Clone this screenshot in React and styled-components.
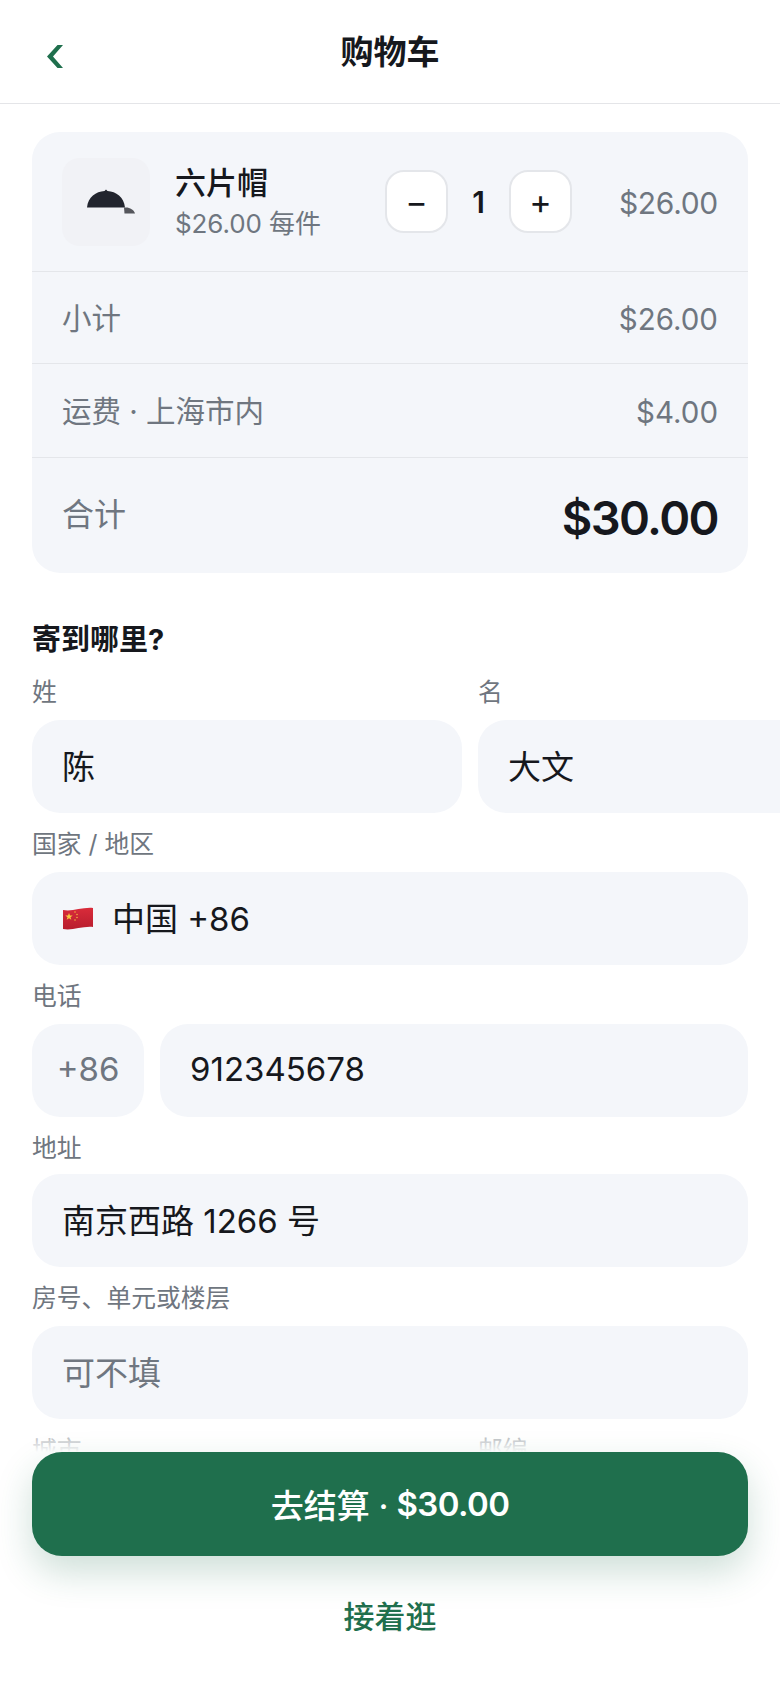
import styled, { createGlobalStyle } from "styled-components";

const GlobalStyle = createGlobalStyle`
  html, body {
    margin: 0;
    padding: 0;
    background: #fff;
  }
  body {
    font-family: Inter, "Noto Sans CJK SC", sans-serif;
    color: #16181d;
  }
  * {
    box-sizing: border-box;
  }
`;

const HatIcon = () => (
  <svg width="57" height="26" viewBox="-9 0 57 26">
    <path d="M0 18.500C1 8 9 2.500 17.500 2L19 0.500L20.500 2C29 2.500 37 8 38 18.500Z" fill="#22252e" />
    <path d="M37 18.500H39C43 18.500 47 21 48 24.500H37.500Z" fill="#55565c" />
  </svg>
);

const ChinaFlag = () => (
  <FlagSvg width="32" height="24" viewBox="0 0 32 24">
    <defs>
      <linearGradient id="flagRed" x1="0" y1="0" x2="0" y2="1">
        <stop offset="0" stopColor="#d92b3a" />
        <stop offset="1" stopColor="#b81d2e" />
      </linearGradient>
    </defs>
    <path d="M1 3C10 5 20 0 31 1V20C20 19 10 24 1 22Z" fill="url(#flagRed)" />
    <path d="M7 6l1 2.600h2.700l-2.200 1.600.8 2.600-2.300-1.600-2.300 1.600.8-2.600-2.200-1.600h2.700Z" fill="#f7c93e" />
    <circle cx="13" cy="5" r="0.700" fill="#f7c93e" />
    <circle cx="15" cy="7.500" r="0.700" fill="#f7c93e" />
    <circle cx="15" cy="10.500" r="0.700" fill="#f7c93e" />
    <circle cx="13" cy="13" r="0.700" fill="#f7c93e" />
  </FlagSvg>
);

export default function App() {
  return (
    <Screen>
      <GlobalStyle />
      <Header>
        <BackButton>
          <svg width="16" height="23" viewBox="0 0 16 23">
            <path d="M10.500 0H16L6 11.500L16 23H10.500L0 11.500Z" fill="#1f6f4d" />
          </svg>
        </BackButton>
        <Title>购物车</Title>
      </Header>

      <Content>
        <Summary>
          <ItemRow>
            <Thumb>
              <HatIcon />
            </Thumb>
            <ItemInfo>
              <ItemName>六片帽</ItemName>
              <ItemEach>$26.00 每件</ItemEach>
            </ItemInfo>
            <Stepper>
              <StepButton>−</StepButton>
              <Qty>1</Qty>
              <StepButton>+</StepButton>
            </Stepper>
            <LinePrice>$26.00</LinePrice>
          </ItemRow>
          <SummaryRow $height={92}>
            <RowLabel>小计</RowLabel>
            <RowValue>$26.00</RowValue>
          </SummaryRow>
          <SummaryRow $height={94}>
            <RowLabel>运费 · 上海市内</RowLabel>
            <RowValue>$4.00</RowValue>
          </SummaryRow>
          <TotalRow>
            <TotalLabel>合计</TotalLabel>
            <TotalValue>$30.00</TotalValue>
          </TotalRow>
        </Summary>

        <SectionTitle>寄到哪里?</SectionTitle>

        <Form>
          <TwoCols>
            <Field>
              <Label>姓</Label>
              <Input>陈</Input>
            </Field>
            <Field>
              <Label>名</Label>
              <Input>大文</Input>
            </Field>
          </TwoCols>
          <Field>
            <Label>国家 / 地区</Label>
            <Input>
              <ChinaFlag />
              <span>中国 +86</span>
            </Input>
          </Field>
          <Field>
            <Label>电话</Label>
            <PhoneRow>
              <Input $muted $center>+86</Input>
              <Input>912345678</Input>
            </PhoneRow>
          </Field>
          <Field $tight>
            <Label>地址</Label>
            <Input>南京西路 1266 号</Input>
          </Field>
          <Field>
            <Label>房号、单元或楼层</Label>
            <Input $muted>可不填</Input>
          </Field>
          <TwoCols>
            <Field>
              <Label>城市</Label>
              <Input>上海</Input>
            </Field>
            <Field>
              <Label>邮编</Label>
              <Input>200040</Input>
            </Field>
          </TwoCols>
        </Form>
      </Content>

      <Footer>
        <CheckoutButton>
          <span>去结算 ·</span>
          <Amount>$30.00</Amount>
        </CheckoutButton>
        <ContinueLink>接着逛</ContinueLink>
      </Footer>
    </Screen>
  );
}

const Screen = styled.div`
  position: relative;
  width: 780px;
  height: 1688px;
  overflow: hidden;
  background: #fff;
`;

const Header = styled.header`
  position: relative;
  height: 104px;
  display: flex;
  align-items: center;
  justify-content: center;
  border-bottom: 1px solid #e4e5e8;
`;

const BackButton = styled.div`
  position: absolute;
  left: 47px;
  top: 45px;
  display: flex;
`;

const Title = styled.h1`
  margin: 2px 0 0;
  font-size: 33px;
  font-weight: 600;
  line-height: 1;
  color: #16181d;
`;

const Content = styled.main`
  padding: 28px 32px 0;
`;

const Summary = styled.section`
  background: #f4f6fa;
  border-radius: 28px;
`;

const ItemRow = styled.div`
  height: 139px;
  padding: 0 30px;
  display: flex;
  align-items: center;
`;

const Thumb = styled.div`
  width: 88px;
  height: 88px;
  border-radius: 18px;
  background: #f1f2f6;
  display: flex;
  align-items: center;
  justify-content: center;
  flex: none;
`;

const ItemInfo = styled.div`
  margin: 4px 0 0 25px;
  width: 210px;
  flex: none;
`;

const ItemName = styled.div`
  font-size: 31px;
  font-weight: 500;
  line-height: 40px;
  margin-top: -2px;
  color: #16181d;
`;

const ItemEach = styled.div`
  font-size: 26px;
  line-height: 36px;
  margin-top: 3px;
  letter-spacing: -0.1px;
  color: #6f7680;
`;

const Stepper = styled.div`
  display: flex;
  align-items: center;
`;

const StepButton = styled.div`
  width: 63px;
  height: 63px;
  border-radius: 19px;
  background: #fff;
  border: 2px solid #e4e6ea;
  display: flex;
  align-items: center;
  justify-content: center;
  font-size: 34px;
  font-weight: 400;
  color: #16181d;
`;

const Qty = styled.div`
  width: 61px;
  text-align: center;
  font-size: 30px;
  font-weight: 600;
`;

const LinePrice = styled.div`
  margin-left: auto;
  padding-top: 2px;
  font-size: 30px;
  letter-spacing: -0.3px;
  color: #6f7680;
`;

const SummaryRow = styled.div`
  height: ${(p) => p.$height}px;
  padding: 0 30px;
  border-top: 1px solid #e4e6ea;
  display: flex;
  align-items: center;
  justify-content: space-between;
  font-size: 29.5px;
  color: #6f7680;
`;

const RowLabel = styled.span`
  padding-bottom: 3px;
`;

const RowValue = styled.span`
  padding-top: 2px;
`;

const TotalRow = styled.div`
  height: 116px;
  padding: 0 30px;
  border-top: 1px solid #e4e6ea;
  display: flex;
  align-items: center;
  justify-content: space-between;
`;

const TotalLabel = styled.span`
  font-size: 32px;
  padding-bottom: 8px;
  color: #6f7680;
`;

const TotalValue = styled.span`
  font-size: 47px;
  font-weight: 600;
  letter-spacing: -1.6px;
  padding-top: 3px;
  color: #16181d;
`;

const SectionTitle = styled.h2`
  margin: 48px 0 0;
  font-size: 29px;
  font-weight: 700;
  line-height: 38px;
  color: #16181d;
`;

const Form = styled.div`
  margin-top: 18px;
  display: flex;
  flex-direction: column;
  gap: 16px;
`;

const TwoCols = styled.div`
  display: grid;
  grid-template-columns: 430px 430px;
  gap: 16px;
`;

const Field = styled.div`
  display: flex;
  flex-direction: column;
  gap: ${(p) => (p.$tight ? "11px" : "13px")};
`;

const Label = styled.div`
  font-size: 24.800px;
  line-height: 30px;
  color: #6f7680;
`;

const Input = styled.div`
  height: 93px;
  border-radius: 28px;
  background: #f4f6fa;
  padding: ${(p) => (p.$center ? "0 0 3px" : "0 30px 3px")};
  display: flex;
  align-items: center;
  justify-content: ${(p) => (p.$center ? "center" : "flex-start")};
  gap: 18px;
  font-size: 33px;
  color: ${(p) => (p.$muted ? "#6f7680" : "#16181d")};
`;

const FlagSvg = styled.svg`
  margin-top: 3px;
  flex: none;
`;

const PhoneRow = styled.div`
  display: grid;
  grid-template-columns: 112px 1fr;
  gap: 16px;
`;

const Footer = styled.footer`
  position: absolute;
  left: 0;
  right: 0;
  bottom: 0;
  padding: 0 32px 10px;
  height: 268px;
  display: flex;
  flex-direction: column;
  justify-content: flex-end;
  background: linear-gradient(rgba(255, 255, 255, 0), #fff 12%);
`;

const CheckoutButton = styled.div`
  height: 104px;
  border-radius: 30px;
  background: #1f6f4d;
  box-shadow: 0 16px 36px rgba(31, 111, 77, 0.22);
  display: flex;
  align-items: center;
  justify-content: center;
  gap: 8px;
  font-size: 33px;
  font-weight: 500;
  color: #fff;
`;

const Amount = styled.span`
  font-weight: 600;
  letter-spacing: -0.6px;
`;

const ContinueLink = styled.div`
  height: 122px;
  padding-bottom: 6px;
  display: flex;
  align-items: center;
  justify-content: center;
  font-size: 31px;
  font-weight: 500;
  color: #1f6f4d;
`;
